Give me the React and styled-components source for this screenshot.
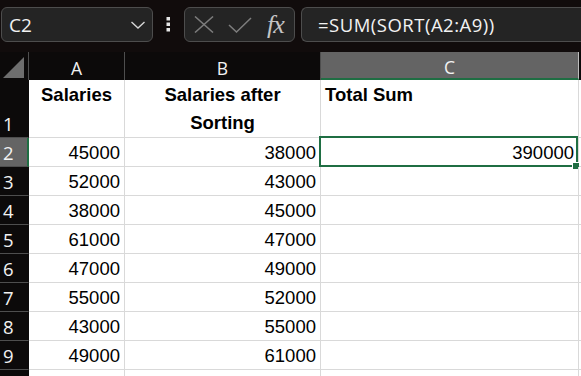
import React from "react";
import styled, { createGlobalStyle, css } from "styled-components";

const colors = {
  chrome: "#110c0c",
  header: "#0c0a0a",
  headerLine: "#4e4e4e",
  headerActive: "#646464",
  box: "#242424",
  boxBorder: "#4d4d4d",
  grid: "#d9d9d9",
  green: "#1f6e43",
  text: "#000",
  white: "#f2f2f2",
  icon: "#7d7d7d",
};

const GlobalStyle = createGlobalStyle`
  html, body {
    margin: 0;
    padding: 0;
    background: #fff;
    overflow: hidden;
  }
  * {
    box-sizing: border-box;
  }
`;

const Root = styled.div`
  width: 581px;
  height: 376px;
  overflow: hidden;
  background: #fff;
`;

const Toolbar = styled.div`
  height: 52px;
  background: ${colors.chrome};
  display: flex;
  align-items: flex-start;
  padding: 7px 0 0 1px;
  font-family: "Open Sans", "Noto Sans", sans-serif;
  color: ${colors.white};
`;

const NameBox = styled.div`
  width: 152px;
  height: 35px;
  background: ${colors.box};
  border: 1px solid ${colors.boxBorder};
  border-radius: 6px;
  display: flex;
  align-items: center;
  justify-content: space-between;
  padding: 0 6px 0 7px;
  font-size: 19px;
`;

const Dots = styled.div`
  width: 31px;
  height: 35px;
  display: flex;
  align-items: center;
  justify-content: center;
`;

const FxBox = styled.div`
  width: 111px;
  height: 35px;
  background: ${colors.box};
  border: 1px solid ${colors.boxBorder};
  border-radius: 6px;
  display: flex;
  align-items: center;
  padding: 0 0 0 9px;
  gap: 14px;
`;

const Fx = styled.span`
  font-family: "Liberation Serif", "DejaVu Serif", serif;
  font-style: italic;
  font-size: 26px;
  color: #c4c4c4;
  margin-left: 1px;
  letter-spacing: -1px;
  line-height: 1;
`;

const FormulaBox = styled.div`
  flex: 1;
  height: 35px;
  margin-left: 6px;
  background: ${colors.box};
  border: 1px solid ${colors.boxBorder};
  border-right: none;
  border-radius: 6px 0 0 6px;
  display: flex;
  align-items: center;
  padding-left: 16px;
  font-size: 18.5px;
  letter-spacing: 0.5px;
`;

const Sheet = styled.div`
  display: grid;
  grid-template-columns: 29px 96px 196px 258px 1fr;
  grid-template-rows: 28px 58px repeat(9, 29px);
`;

const Corner = styled.div`
  background: ${colors.header};
  border-right: 1px solid ${colors.headerLine};
  display: flex;
  align-items: flex-end;
  justify-content: flex-end;
  padding: 0 4px 2px 0;
`;

const ColHeader = styled.div`
  background: ${({ active }) => (active ? colors.headerActive : colors.header)};
  border-right: 1px solid
    ${({ active }) => (active ? "#bdbdbd" : colors.headerLine)};
  ${({ active }) =>
    active &&
    css`
      border-bottom: 2px solid ${colors.green};
    `}
  color: ${colors.white};
  font-family: "Open Sans", "Noto Sans", sans-serif;
  font-size: 17.5px;
  display: flex;
  align-items: center;
  justify-content: center;
  padding-top: 3px;
`;

const RowHeader = styled.div`
  background: ${({ active }) => (active ? colors.headerActive : colors.header)};
  border-bottom: 1px solid ${colors.headerLine};
  border-right: ${({ active }) =>
    active ? `2px solid ${colors.green}` : `1px solid ${colors.header}`};
  color: ${colors.white};
  font-family: "Open Sans", "Noto Sans", sans-serif;
  font-size: 18.5px;
  line-height: 22px;
  display: flex;
  align-items: flex-end;
  padding: 0 0 2px 3px;
`;

const Cell = styled.div`
  position: relative;
  border-right: 1px solid ${colors.grid};
  border-bottom: 1px solid ${colors.grid};
  font-family: "Liberation Sans", Arial, sans-serif;
  font-size: 18.5px;
  color: ${colors.text};
  display: flex;
  align-items: flex-end;
  justify-content: ${({ align }) =>
    align === "right" ? "flex-end" : align === "center" ? "center" : "flex-start"};
  padding: 0 4px 2px 4px;
  line-height: 22px;
`;

const HeadCell = styled(Cell)`
  font-weight: bold;
  font-size: 18.5px;
  align-items: flex-start;
  text-align: ${({ align }) => align || "left"};
  line-height: 28px;
  padding-top: 1px;
`;

const Selection = styled.div`
  position: absolute;
  top: -2px;
  left: -2px;
  right: 0;
  bottom: -1px;
  border: 2px solid ${colors.green};
  pointer-events: none;
`;

const FillHandle = styled.div`
  position: absolute;
  right: -3px;
  bottom: -4px;
  width: 6px;
  height: 6px;
  background: ${colors.green};
  outline: 1px solid #fff;
`;

const Chevron = () => (
  <svg width="16" height="10" viewBox="0 0 16 10">
    <polyline
      points="1.5,2 8,8 14.5,2"
      fill="none"
      stroke="#d6d6d6"
      strokeWidth="1.4"
    />
  </svg>
);

const VDots = () => (
  <svg width="5" height="15" viewBox="0 0 5 15">
    <rect x="0.5" y="0" width="3.5" height="3.5" fill="#e6e6e6" />
    <rect x="0.5" y="5.5" width="3.5" height="3.5" fill="#e6e6e6" />
    <rect x="0.5" y="11" width="3.5" height="3.5" fill="#e6e6e6" />
  </svg>
);

const Cross = () => (
  <svg width="20" height="17" viewBox="0 0 20 17">
    <line x1="1" y1="0.5" x2="19" y2="16.5" stroke={colors.icon} strokeWidth="1.5" />
    <line x1="19" y1="0.5" x2="1" y2="16.5" stroke={colors.icon} strokeWidth="1.5" />
  </svg>
);

const Check = () => (
  <svg width="24" height="16" viewBox="0 0 24 16">
    <polyline
      points="1,8 8.5,15 23,1"
      fill="none"
      stroke={colors.icon}
      strokeWidth="1.5"
    />
  </svg>
);

const Triangle = () => (
  <svg width="21" height="21" viewBox="0 0 21 21">
    <polygon points="21,0 21,21 0,21" fill="#6e6e6e" />
  </svg>
);

const salaries = [45000, 52000, 38000, 61000, 47000, 55000, 43000, 49000];
const sorted = [...salaries].sort((a, b) => a - b);

export default function App() {
  return (
    <Root>
      <GlobalStyle />
      <Toolbar>
        <NameBox>
          <span>C2</span>
          <Chevron />
        </NameBox>
        <Dots>
          <VDots />
        </Dots>
        <FxBox>
          <Cross />
          <Check />
          <Fx>fx</Fx>
        </FxBox>
        <FormulaBox>=SUM(SORT(A2:A9))</FormulaBox>
      </Toolbar>
      <Sheet>
        <Corner>
          <Triangle />
        </Corner>
        <ColHeader>A</ColHeader>
        <ColHeader>B</ColHeader>
        <ColHeader active>C</ColHeader>
        <ColHeader />

        <RowHeader>1</RowHeader>
        <HeadCell align="center">Salaries</HeadCell>
        <HeadCell align="center">
          Salaries after
          <br />
          Sorting
        </HeadCell>
        <HeadCell>Total Sum</HeadCell>
        <Cell />

        {salaries.map((value, i) => (
          <React.Fragment key={i}>
            <RowHeader active={i === 0}>{i + 2}</RowHeader>
            <Cell align="right">{value}</Cell>
            <Cell align="right">{sorted[i]}</Cell>
            <Cell align="right">
              {i === 0 && "390000"}
              {i === 0 && (
                <Selection>
                  <FillHandle />
                </Selection>
              )}
            </Cell>
            <Cell />
          </React.Fragment>
        ))}

        <RowHeader />
        <Cell />
        <Cell />
        <Cell />
        <Cell />
      </Sheet>
    </Root>
  );
}
